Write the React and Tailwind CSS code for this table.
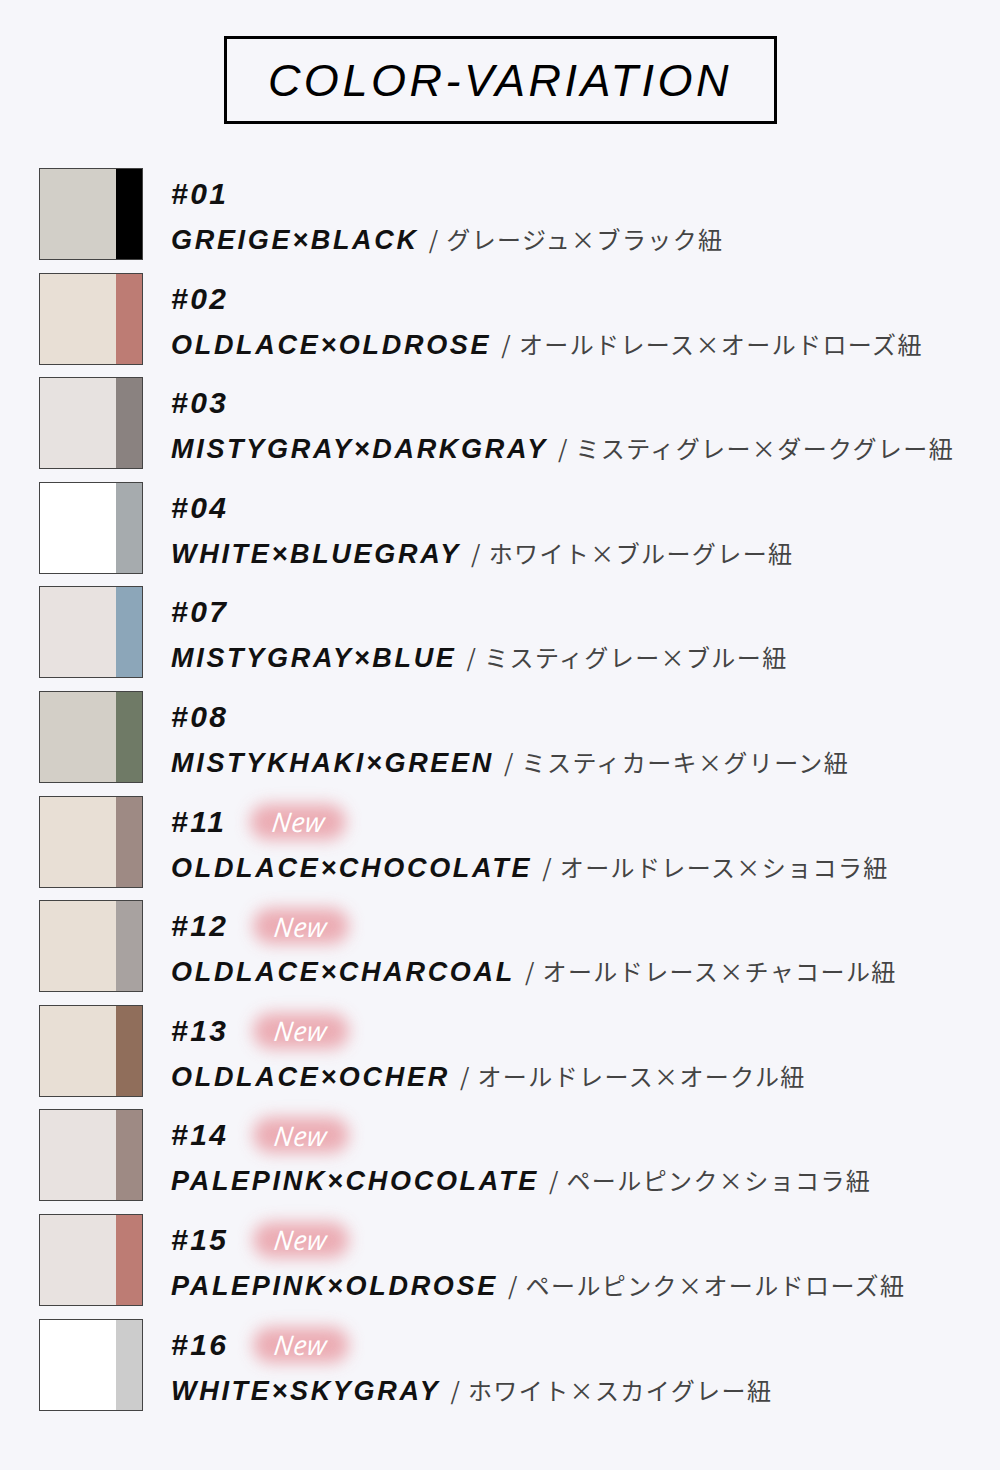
import React from 'react';

const rows = [
  { no: '01', name: 'GREIGE×BLACK', jp: 'グレージュ×ブラック紐', base: '#d2cfc8', line: '#000000' },
  { no: '02', name: 'OLDLACE×OLDROSE', jp: 'オールドレース×オールドローズ紐', base: '#e8dfd5', line: '#bd7c74' },
  { no: '03', name: 'MISTYGRAY×DARKGRAY', jp: 'ミスティグレー×ダークグレー紐', base: '#e7e2e0', line: '#8a8280' },
  { no: '04', name: 'WHITE×BLUEGRAY', jp: 'ホワイト×ブルーグレー紐', base: '#ffffff', line: '#a6abae' },
  { no: '07', name: 'MISTYGRAY×BLUE', jp: 'ミスティグレー×ブルー紐', base: '#e8e2e0', line: '#8ca6b9' },
  { no: '08', name: 'MISTYKHAKI×GREEN', jp: 'ミスティカーキ×グリーン紐', base: '#d3cfc7', line: '#6f7a66' },
  { no: '11', name: 'OLDLACE×CHOCOLATE', jp: 'オールドレース×ショコラ紐', base: '#e8dfd5', line: '#9e8a84', isNew: true },
  { no: '12', name: 'OLDLACE×CHARCOAL', jp: 'オールドレース×チャコール紐', base: '#e8dfd5', line: '#a8a2a0', isNew: true },
  { no: '13', name: 'OLDLACE×OCHER', jp: 'オールドレース×オークル紐', base: '#e8dfd5', line: '#906e5b', isNew: true },
  { no: '14', name: 'PALEPINK×CHOCOLATE', jp: 'ペールピンク×ショコラ紐', base: '#e8e2e0', line: '#9e8a84', isNew: true },
  { no: '15', name: 'PALEPINK×OLDROSE', jp: 'ペールピンク×オールドローズ紐', base: '#e8e2e0', line: '#bd7c74', isNew: true },
  { no: '16', name: 'WHITE×SKYGRAY', jp: 'ホワイト×スカイグレー紐', base: '#ffffff', line: '#cccccc', isNew: true },
];

function NewBadge() {
  return (
    <span className="relative ml-[18px] inline-flex h-[30px] w-[108px] items-center justify-center">
      <span className="absolute inset-x-[6px] inset-y-[-3px] rounded-full bg-[#eaa0a8] opacity-85 blur-[8px]" />
      <span
        className="relative -skew-x-6 text-[27px] italic leading-none tracking-[0.5px] text-white"
        style={{ fontFamily: '"Open Sans", sans-serif' }}
      >
        New
      </span>
    </span>
  );
}

export default function App() {
  return (
    <div className="min-h-[1470px] w-[1000px] bg-[#f6f6fa]" style={{ fontFamily: '"Liberation Sans", Arial, sans-serif' }}>
      <div className="flex justify-center pt-[36px]">
        <div className="flex h-[88px] w-[553px] items-center justify-center border-[3px] border-black">
          <h1 className="text-[45px] italic leading-none tracking-[3.5px] text-black">COLOR-VARIATION</h1>
        </div>
      </div>

      <div className="mt-[44px] flex flex-col gap-[12.6px] pl-[39px]">
        {rows.map((r) => (
          <div key={r.no} className="flex h-[92px]">
            <div className="flex h-[92px] w-[104px] shrink-0 border border-[#444]">
              <div className="w-[76px]" style={{ background: r.base }} />
              <div className="flex-1" style={{ background: r.line }} />
            </div>
            <div className="ml-[28px] pt-[11px]">
              <div className="flex h-[30px] items-center">
                <span className="text-[30px] font-bold italic leading-none tracking-[2.5px] text-[#111]">#{r.no}</span>
                {r.isNew && <NewBadge />}
              </div>
              <div className="mt-[18px] flex items-baseline whitespace-nowrap leading-none">
                <span className="text-[27px] font-bold italic tracking-[2.7px] text-[#111]">{r.name}</span>
                <span
                  className="ml-[10px] text-[24px] tracking-[1.4px] text-[#444]"
                  style={{ fontFamily: '"Noto Sans CJK JP", "Liberation Sans", sans-serif' }}
                >
                  / {r.jp}
                </span>
              </div>
            </div>
          </div>
        ))}
      </div>
    </div>
  );
}
